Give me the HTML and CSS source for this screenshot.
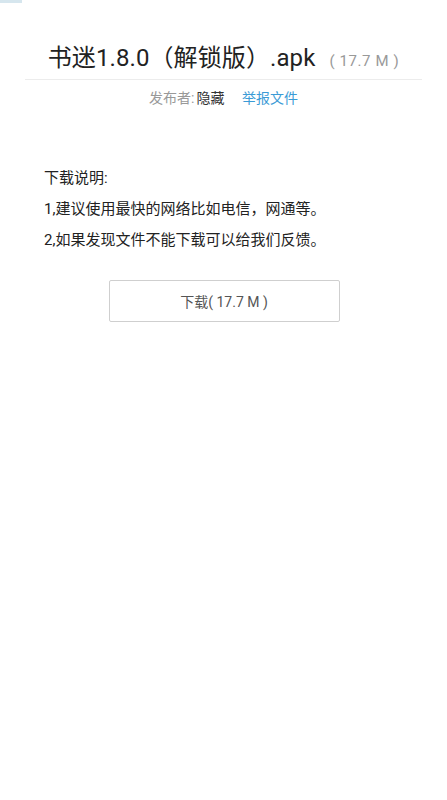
FILE: index.html
```html
<!DOCTYPE html>
<html lang="zh">
<head>
<meta charset="utf-8">
<link rel="stylesheet" href="styles.css">
</head>
<body>
<div class="topmark"></div>
<div class="page">
  <div class="title-row">
    <h1 class="title">书迷1.8.0（解锁版）.apk</h1>
    <span class="size">( 17.7 M )</span>
  </div>
  <div class="meta">
    <span class="label">发布者:</span><span class="author">隐藏</span>
    <a class="report">举报文件</a>
  </div>
  <div class="notes">
    <p>下载说明:</p>
    <p>1,建议使用最快的网络比如电信，网通等。</p>
    <p>2,如果发现文件不能下载可以给我们反馈。</p>
  </div>
  <div class="btn-wrap">
    <button class="dl">下载( 17.7 M )</button>
  </div>
</div>
</body>
</html>
```

FILE: styles.css
```css
html, body {
  margin: 0;
  padding: 0;
  background: #fff;
}
body {
  font-family: Roboto, "Noto Sans CJK SC", sans-serif;
  color: #222;
  position: relative;
}
.topmark {
  position: absolute;
  left: 0;
  top: 0;
  width: 22px;
  height: 3px;
  background: #d6e6ee;
}
.page {
  padding-top: 41px;
}
.title-row {
  margin: 0 25px;
  display: flex;
  align-items: baseline;
  justify-content: center;
  padding-bottom: 4px;
  border-bottom: 1px solid #ececec;
}
.title {
  margin: 0;
  font-size: 24px;
  font-weight: normal;
  color: #222;
  line-height: 34px;
  letter-spacing: 0.1px;
}
.size {
  margin-left: 14px;
  font-size: 15px;
  color: #999;
  letter-spacing: 0.6px;
}
.meta {
  text-align: center;
  font-size: 14px;
  line-height: 20px;
  margin-top: 8px;
}
.label {
  color: #999;
}
.author {
  color: #333;
  margin-left: 2px;
}
.report {
  color: #3b9bd6;
  margin-left: 14px;
}
.notes {
  margin-top: 55px;
  padding-left: 44px;
  font-size: 15px;
  color: #222;
}
.notes p {
  margin: 0;
  line-height: 31px;
}
.btn-wrap {
  margin-top: 24px;
  display: flex;
  justify-content: center;
}
.dl {
  width: 231px;
  height: 42px;
  margin-left: 1px;
  background: #fff;
  border: 1px solid #cfcfcf;
  border-radius: 2px;
  font-family: Roboto, "Noto Sans CJK SC", sans-serif;
  font-size: 14px;
  color: #555;
  padding: 0;
}
```
